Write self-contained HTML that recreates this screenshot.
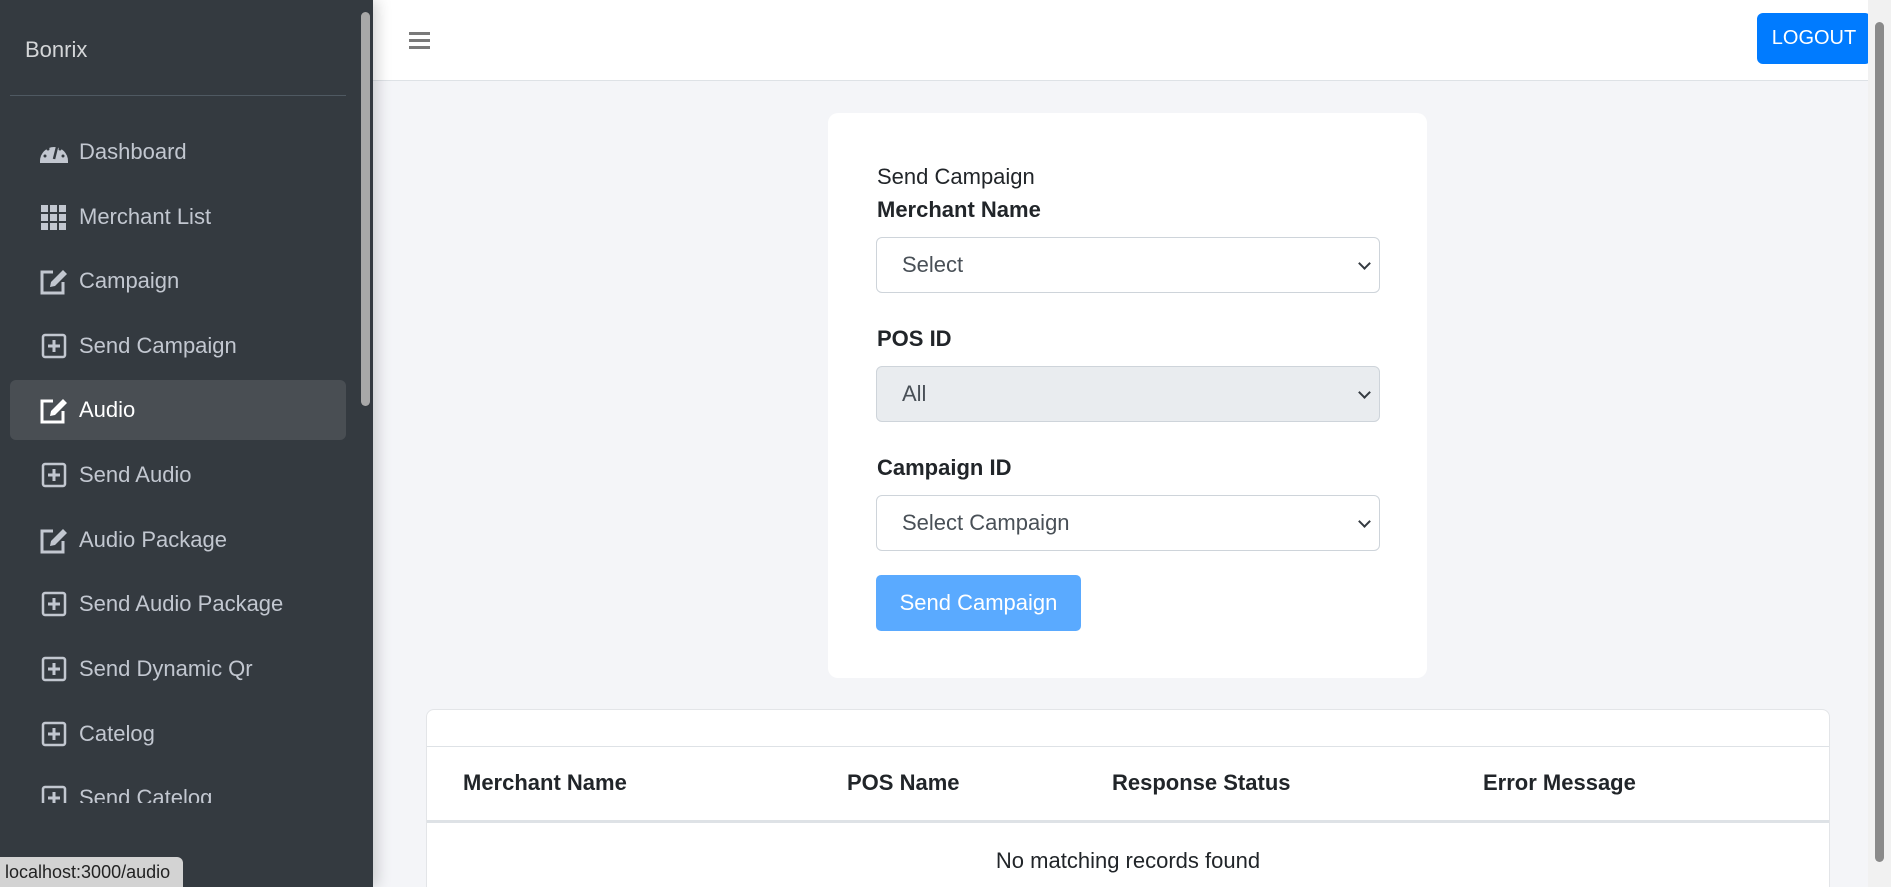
<!DOCTYPE html>
<html style="overflow:hidden;height:887px"><head><meta charset="utf-8"><style>
*{box-sizing:border-box;margin:0;padding:0}
body{width:1891px;height:887px;overflow:hidden;background:#f4f5f8;font-family:"Liberation Sans",sans-serif;position:relative}
.sb{position:absolute;left:0;top:0;width:373px;height:887px;background:#343a40;box-shadow:4px 0 14px rgba(0,0,0,.18);z-index:2}
.brand{position:absolute;left:25px;top:37px;color:#d4d6d8;font-size:22px}
.div{position:absolute;left:10px;top:95px;width:336px;height:1px;background:#4f5962}
.nav{position:absolute;left:10px;top:120px;width:336px;height:683px;overflow:hidden}
.it{height:64.6px;display:flex;align-items:center;padding-left:29px;color:#c2c7d0;font-size:22px;border-radius:6px}
.it svg{width:30px;height:30px;margin-right:10px;flex:none}
.it.act{background:#494e53;color:#fff;height:60px;margin:2px 0 2.6px}
.scr{position:absolute;left:361px;top:12px;width:9px;height:394px;background:#a8a8a8;border-radius:5px}
.hdr{position:absolute;left:373px;top:0;width:1495px;height:81px;background:#fff;border-bottom:1px solid #dee2e6}
.ham{position:absolute;left:36px;top:32px;width:21px}
.ham i{display:block;height:3px;background:#7a7a7a;margin-bottom:4px}
.lo{position:absolute;left:1384px;top:13px;width:114px;height:51px;background:#007bff;color:#fff;border-radius:6px;font-size:20px;display:flex;align-items:center;justify-content:center}
.rs{position:absolute;left:1868px;top:0;width:23px;height:887px;background:#f1f1f1}
.rs div{position:absolute;left:7px;top:22px;width:9px;height:840px;background:#8a8a8a;border-radius:5px}
.card{position:absolute;left:828px;top:113px;width:599px;height:565px;background:#fff;border-radius:10px}
.t{position:absolute;left:49px;font-size:22px;color:#212529}
.b{font-weight:bold}
.sel{position:absolute;left:48px;width:504px;height:56px;border:1px solid #ced4da;border-radius:6px;font-size:22px;color:#495057;padding-left:25px;display:flex;align-items:center}
.sel:after{content:"";position:absolute;right:10px;top:21px;width:7px;height:7px;border-right:2px solid #343a40;border-bottom:2px solid #343a40;transform:rotate(45deg)}
.btn{position:absolute;left:48px;top:462px;width:205px;height:56px;background:#5aaaff;border-radius:5px;color:#fff;font-size:22px;display:flex;align-items:center;justify-content:center}
.tc{position:absolute;left:426px;top:709px;width:1404px;height:190px;background:#fff;border:1px solid #e3e5e8;border-radius:8px}
.th{position:absolute;top:60px;font-size:22px;font-weight:bold;color:#212529}
.st{position:absolute;left:0;top:857px;width:183px;height:30px;background:#d3d3d3;border-radius:0 6px 0 0;font-size:18px;color:#222;padding:5px 0 0 5px;z-index:3}
</style></head><body>
<div class="sb">
<div class="brand">Bonrix</div><div class="div"></div>
<div class="nav">
<div class="it"><svg viewBox="0 0 30 30"><path d="M1 24a14 14 0 0 1 28 0v2H1z" fill="#c2c7d0"/><circle cx="6" cy="19" r="1.5" fill="#343a40"/><circle cx="9" cy="12" r="1.5" fill="#343a40"/><circle cx="21" cy="12" r="1.5" fill="#343a40"/><circle cx="24" cy="19" r="1.5" fill="#343a40"/><path d="M15 22l3-12" stroke="#343a40" stroke-width="2.5"/></svg>Dashboard</div>
<div class="it"><svg viewBox="0 0 30 30" fill="#c2c7d0"><rect x="2" y="3" width="7" height="7"/><rect x="11" y="3" width="7" height="7"/><rect x="20" y="3" width="7" height="7"/><rect x="2" y="12" width="7" height="7"/><rect x="11" y="12" width="7" height="7"/><rect x="20" y="12" width="7" height="7"/><rect x="2" y="21" width="7" height="7"/><rect x="11" y="21" width="7" height="7"/><rect x="20" y="21" width="7" height="7"/></svg>Merchant List</div>
<div class="it"><svg viewBox="0 0 30 30"><path d="M14 6H3v21h21V16" fill="none" stroke="#c2c7d0" stroke-width="3"/><path d="M11 21l1-5 12-12 4 4-12 12z" fill="#c2c7d0"/></svg>Campaign</div>
<div class="it"><svg viewBox="0 0 30 30"><rect x="4" y="4" width="22" height="22" rx="2" fill="none" stroke="#c2c7d0" stroke-width="2.5"/><path d="M15 9v12M9 15h12" stroke="#c2c7d0" stroke-width="3"/></svg>Send Campaign</div>
<div class="it act"><svg viewBox="0 0 30 30"><path d="M14 6H3v21h21V16" fill="none" stroke="#fff" stroke-width="3"/><path d="M11 21l1-5 12-12 4 4-12 12z" fill="#fff"/></svg>Audio</div>
<div class="it"><svg viewBox="0 0 30 30"><rect x="4" y="4" width="22" height="22" rx="2" fill="none" stroke="#c2c7d0" stroke-width="2.5"/><path d="M15 9v12M9 15h12" stroke="#c2c7d0" stroke-width="3"/></svg>Send Audio</div>
<div class="it"><svg viewBox="0 0 30 30"><path d="M14 6H3v21h21V16" fill="none" stroke="#c2c7d0" stroke-width="3"/><path d="M11 21l1-5 12-12 4 4-12 12z" fill="#c2c7d0"/></svg>Audio Package</div>
<div class="it"><svg viewBox="0 0 30 30"><rect x="4" y="4" width="22" height="22" rx="2" fill="none" stroke="#c2c7d0" stroke-width="2.5"/><path d="M15 9v12M9 15h12" stroke="#c2c7d0" stroke-width="3"/></svg>Send Audio Package</div>
<div class="it"><svg viewBox="0 0 30 30"><rect x="4" y="4" width="22" height="22" rx="2" fill="none" stroke="#c2c7d0" stroke-width="2.5"/><path d="M15 9v12M9 15h12" stroke="#c2c7d0" stroke-width="3"/></svg>Send Dynamic Qr</div>
<div class="it"><svg viewBox="0 0 30 30"><rect x="4" y="4" width="22" height="22" rx="2" fill="none" stroke="#c2c7d0" stroke-width="2.5"/><path d="M15 9v12M9 15h12" stroke="#c2c7d0" stroke-width="3"/></svg>Catelog</div>
<div class="it"><svg viewBox="0 0 30 30"><rect x="4" y="4" width="22" height="22" rx="2" fill="none" stroke="#c2c7d0" stroke-width="2.5"/><path d="M15 9v12M9 15h12" stroke="#c2c7d0" stroke-width="3"/></svg>Send Catelog</div>
</div>
<div class="scr"></div>
</div>
<div class="hdr"><div class="ham"><i></i><i></i><i></i></div><div class="lo">LOGOUT</div></div>
<div class="card">
<div class="t" style="top:51px">Send Campaign</div>
<div class="t b" style="top:84px">Merchant Name</div>
<div class="sel" style="top:124px">Select</div>
<div class="t b" style="top:213px">POS ID</div>
<div class="sel" style="top:253px;background:#e9ecef">All</div>
<div class="t b" style="top:342px">Campaign ID</div>
<div class="sel" style="top:382px">Select Campaign</div>
<div class="btn">Send Campaign</div>
</div>
<div class="tc">
<div style="position:absolute;left:0;right:0;top:36px;height:1px;background:#dee2e6"></div>
<div class="th" style="left:36px">Merchant Name</div>
<div class="th" style="left:420px">POS Name</div>
<div class="th" style="left:685px">Response Status</div>
<div class="th" style="left:1056px">Error Message</div>
<div style="position:absolute;left:0;right:0;top:110px;height:3px;background:#dee2e6"></div>
<div style="position:absolute;left:0;right:0;top:138px;text-align:center;font-size:22px;color:#212529">No matching records found</div>
</div>
<div class="rs"><div></div></div>
<div class="st">localhost:3000/audio</div>
</body></html>
